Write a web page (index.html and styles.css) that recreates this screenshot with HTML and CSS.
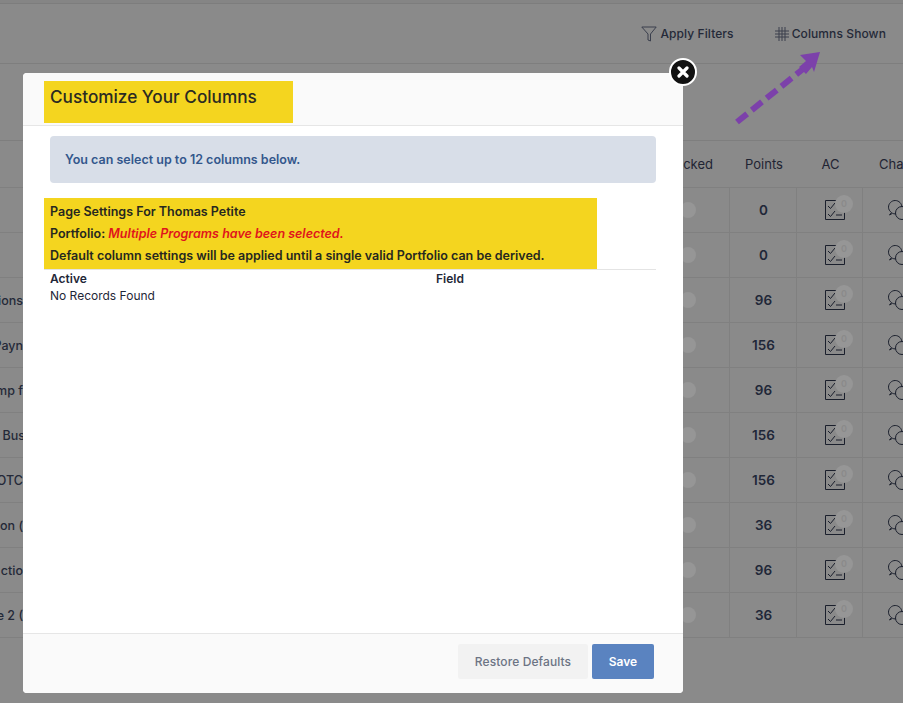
FILE: index.html
```html
<!DOCTYPE html>
<html lang="en">
<head>
<meta charset="utf-8">
<title>Customize Your Columns</title>
<link rel="stylesheet" href="styles.css">
</head>
<body>
<svg width="0" height="0" class="defs">
  <defs>
    <symbol id="check" viewBox="0 0 20 20">
      <path d="M.5.5h19v19H.5z" fill="none" stroke="#1a1f2c" stroke-width="1"/>
      <path d="M3 6l2.500 2.500L10 3M3 14l2.500 2.500L10 11M11 15h6" fill="none" stroke="#1a1f2c" stroke-width="1"/>
    </symbol>
    <symbol id="chat" viewBox="0 0 24 20">
      <path d="M3.500 12.500C1.700 11.300.5 9.300.5 7.200.5 3.600 3.500.5 7.200.5s6.700 3.100 6.700 6.700c0 3.600-3 6.700-6.700 6.700-1 0-1.900-.2-2.700-.6L1.500 15z" fill="none" stroke="#1a1f2c" stroke-width="1"/>
      <circle cx="14" cy="13" r="6.500" fill="#8a8a8a" stroke="#1a1f2c" stroke-width="1"/>
    </symbol>
  </defs>
</svg>
<div class="page">
  <div class="topline"></div>
  <header class="toolbar">
    <span class="tool">
      <svg class="tool-icon" width="16" height="18" viewBox="0 0 16 18"><path d="M.8 2h14.400L9.500 9v7l-2.500-1V9z" fill="none" stroke="#3a3f4d" stroke-width="1"/></svg>
      Apply Filters
    </span>
    <span class="tool">
      <svg class="tool-icon" width="14" height="14" viewBox="0 0 14 14"><path d="M4 0v14M7 0v14M10 0v14M0 4h14M0 7h14M0 10h14" stroke="#3a3f4d" stroke-width="1"/></svg>
      Columns Shown
    </span>
  </header>
  <div class="band"></div>
  <div class="table">
    <div class="row head">
      <div class="cell-a"></div>
      <div class="cell-b">Locked</div>
      <div class="cell-n">Points</div>
      <div class="cell-n">AC</div>
      <div class="cell-c">Chat</div>
    </div>
    <div class="row"><div class="cell-a"></div><div class="cell-b"><i class="dot"></i></div><div class="cell-n num">0</div><div class="cell-n ac"><svg class="i-check"><use href="#check"/></svg><b class="badge">0</b></div><div class="cell-c"><svg class="i-chat"><use href="#chat"/></svg></div></div>
    <div class="row"><div class="cell-a"></div><div class="cell-b"><i class="dot"></i></div><div class="cell-n num">0</div><div class="cell-n ac"><svg class="i-check"><use href="#check"/></svg><b class="badge">0</b></div><div class="cell-c"><svg class="i-chat"><use href="#chat"/></svg></div></div>
    <div class="row"><div class="cell-a">ions</div><div class="cell-b"><i class="dot"></i></div><div class="cell-n num">96</div><div class="cell-n ac"><svg class="i-check"><use href="#check"/></svg><b class="badge">0</b></div><div class="cell-c"><svg class="i-chat"><use href="#chat"/></svg></div></div>
    <div class="row"><div class="cell-a">Payn</div><div class="cell-b"><i class="dot"></i></div><div class="cell-n num">156</div><div class="cell-n ac"><svg class="i-check"><use href="#check"/></svg><b class="badge">0</b></div><div class="cell-c"><svg class="i-chat"><use href="#chat"/></svg></div></div>
    <div class="row"><div class="cell-a">mp f</div><div class="cell-b"><i class="dot"></i></div><div class="cell-n num">96</div><div class="cell-n ac"><svg class="i-check"><use href="#check"/></svg><b class="badge">0</b></div><div class="cell-c"><svg class="i-chat"><use href="#chat"/></svg></div></div>
    <div class="row"><div class="cell-a"><span class="shifted">Bus</span></div><div class="cell-b"><i class="dot"></i></div><div class="cell-n num">156</div><div class="cell-n ac"><svg class="i-check"><use href="#check"/></svg><b class="badge">0</b></div><div class="cell-c"><svg class="i-chat"><use href="#chat"/></svg></div></div>
    <div class="row"><div class="cell-a">OTC</div><div class="cell-b"><i class="dot"></i></div><div class="cell-n num">156</div><div class="cell-n ac"><svg class="i-check"><use href="#check"/></svg><b class="badge">0</b></div><div class="cell-c"><svg class="i-chat"><use href="#chat"/></svg></div></div>
    <div class="row"><div class="cell-a">ion (</div><div class="cell-b"><i class="dot"></i></div><div class="cell-n num">36</div><div class="cell-n ac"><svg class="i-check"><use href="#check"/></svg><b class="badge">0</b></div><div class="cell-c"><svg class="i-chat"><use href="#chat"/></svg></div></div>
    <div class="row"><div class="cell-a">ctio</div><div class="cell-b"><i class="dot"></i></div><div class="cell-n num">96</div><div class="cell-n ac"><svg class="i-check"><use href="#check"/></svg><b class="badge">0</b></div><div class="cell-c"><svg class="i-chat"><use href="#chat"/></svg></div></div>
    <div class="row"><div class="cell-a">e 2 (</div><div class="cell-b"><i class="dot"></i></div><div class="cell-n num">36</div><div class="cell-n ac"><svg class="i-check"><use href="#check"/></svg><b class="badge">0</b></div><div class="cell-c"><svg class="i-chat"><use href="#chat"/></svg></div></div>
  </div>
</div>

<svg class="arrow" width="100" height="90" viewBox="0 0 100 90">
  <path d="M6 76L72 23" fill="none" stroke="#7c41aa" stroke-width="6" stroke-dasharray="13 6"/>
  <path d="M89 6L69 9L75 15L68 21L75 28L81 21L83 26z" fill="#7c41aa"/>
</svg>

<section class="modal">
  <div class="modal-head">
    <h2 class="title">Customize Your Columns</h2>
  </div>
  <div class="modal-body">
    <div class="notice">You can select up to 12 columns below.</div>
    <div class="settings">
      <div>Page Settings For Thomas Petite</div>
      <div>Portfolio: <em class="warn">Multiple Programs have been selected.</em></div>
      <div>Default column settings will be applied until a single valid Portfolio can be derived.</div>
    </div>
    <div class="fields">
      <span class="f-active">Active</span>
      <span class="f-field">Field</span>
    </div>
    <div class="empty">No Records Found</div>
  </div>
  <div class="modal-foot">
    <button class="btn btn-light">Restore Defaults</button>
    <button class="btn btn-primary">Save</button>
  </div>
</section>

<div class="close">
  <svg width="12" height="12" viewBox="0 0 12 12"><path d="M2 2l8 8M10 2l-8 8" stroke="#fff" stroke-width="3.200" stroke-linecap="round"/></svg>
</div>
</body>
</html>
```

FILE: styles.css
```css
* { box-sizing: border-box; }
html, body { margin: 0; height: 100%; }
body {
  position: relative;
  width: 903px;
  height: 703px;
  overflow: hidden;
  background: #8a8a8a;
  font-family: Inter, "Liberation Sans", sans-serif;
  color: #1f2433;
}
.defs { position: absolute; }
.page { width: 903px; height: 703px; overflow: hidden; }
.topline { height: 4px; background: #858585; border-bottom: 1px solid #7d7d7d; }
.toolbar {
  height: 60px;
  display: flex;
  justify-content: flex-end;
  align-items: center;
  gap: 41px;
  padding: 0 17px 0 0;
  border-bottom: 1px solid #7e7e7e;
  font-size: 12px;
  font-weight: 500;
  letter-spacing: .1px;
  color: #242938;
}
.tool { display: flex; align-items: center; gap: 2px; }
.tool-icon { flex: none; margin-right: 1px; }
.band { height: 76px; }
.table { border-top: 1px solid #7e7e7e; }
.row {
  display: grid;
  grid-template-columns: 23px 707px 67px 66px 40px;
  height: 45px;
  border-bottom: 1px solid #808080;
}
.row.head { height: 47px; font-size: 13px; font-weight: 400; }
.row > div { display: flex; align-items: center; white-space: nowrap; }
.cell-a { justify-content: flex-end; font-size: 12.5px; font-weight: 500; color: #242938; }
.shifted { margin-right: -2px; }
.cell-b { justify-content: flex-end; padding-right: 17px; }
.row:not(.head) .cell-b { padding-right: 33px; border-right: 1px solid #808080; }
.cell-n { justify-content: center; position: relative; padding-left: 1px; }
.row:not(.head) .cell-n { border-right: 1px solid #808080; }
.cell-c { padding-left: 16px; overflow: hidden; }
.num { font-size: 13.5px; font-weight: 600; color: #1f2738; }
.dot { display: block; width: 16px; height: 16px; border-radius: 50%; background: #969696; }
.i-check { width: 20px; height: 20px; margin-left: 10px; }
.badge {
  position: absolute;
  left: 38px;
  top: 7px;
  width: 18px;
  height: 18px;
  border-radius: 50%;
  background: #969696;
  color: #8a8a8a;
  font-size: 9px;
  font-weight: 600;
  text-align: center;
  line-height: 18px;
}
.i-chat { width: 24px; height: 20px; flex: none; margin-left: 9px; }

.arrow { position: absolute; left: 731px; top: 46px; }

.modal {
  position: absolute;
  left: 23px;
  top: 73px;
  width: 660px;
  height: 620px;
  background: #fff;
  border-radius: 4px;
  display: flex;
  flex-direction: column;
  overflow: hidden;
}
.modal-head {
  height: 53px;
  padding: 8px 0 0 21px;
  background: #fafafa;
  border-bottom: 1px solid #e6e6e6;
}
.title {
  width: 249px;
  height: 42px;
  margin: 0;
  padding: 3px 0 0 6px;
  background: #f4d51f;
  font-size: 17.2px;
  line-height: 26px;
  font-weight: 500;
  color: #2a2a22;
}
.modal-body { flex: 1; padding: 10px 27px 0 21px; }
.notice {
  height: 47px;
  margin-left: 6px;
  padding-left: 15px;
  line-height: 47px;
  background: #d8dee8;
  border-radius: 4px;
  font-size: 12.5px;
  font-weight: 600;
  color: #33578c;
}
.settings {
  width: 553px;
  height: 71px;
  margin-top: 15px;
  padding: 3px 0 0 6px;
  background: #f4d51f;
  font-size: 12.5px;
  font-weight: 600;
  line-height: 22px;
  color: #26281f;
}
.warn { color: #e0141c; font-style: italic; }
.fields {
  display: flex;
  height: 19px;
  padding: 1px 0 0 6px;
  border-top: 1px solid #e4e4e4;
  font-size: 12px;
  font-weight: 600;
  line-height: 15px;
  color: #1f2738;
}
.f-active { width: 386px; }
.empty { padding-left: 6px; font-size: 12px; line-height: 15px; color: #1f2738; }
.modal-foot {
  height: 60px;
  display: flex;
  justify-content: flex-end;
  align-items: flex-start;
  gap: 4px;
  padding: 10px 29px 0 0;
  background: #fafafa;
  border-top: 1px solid #e6e6e6;
}
.btn {
  height: 35px;
  border: 0;
  border-radius: 2px;
  font-family: inherit;
  font-size: 12px;
  font-weight: 500;
}
.btn-light { width: 130px; background: #f2f2f2; color: #6c7484; letter-spacing: .1px; }
.btn-primary { width: 62px; background: #5a83c0; color: #fff; font-weight: 600; }
.close {
  position: absolute;
  left: 669px;
  top: 58px;
  width: 28px;
  height: 28px;
  display: flex;
  align-items: center;
  justify-content: center;
  background: #111;
  border: 2px solid #fff;
  border-radius: 50%;
}
```
